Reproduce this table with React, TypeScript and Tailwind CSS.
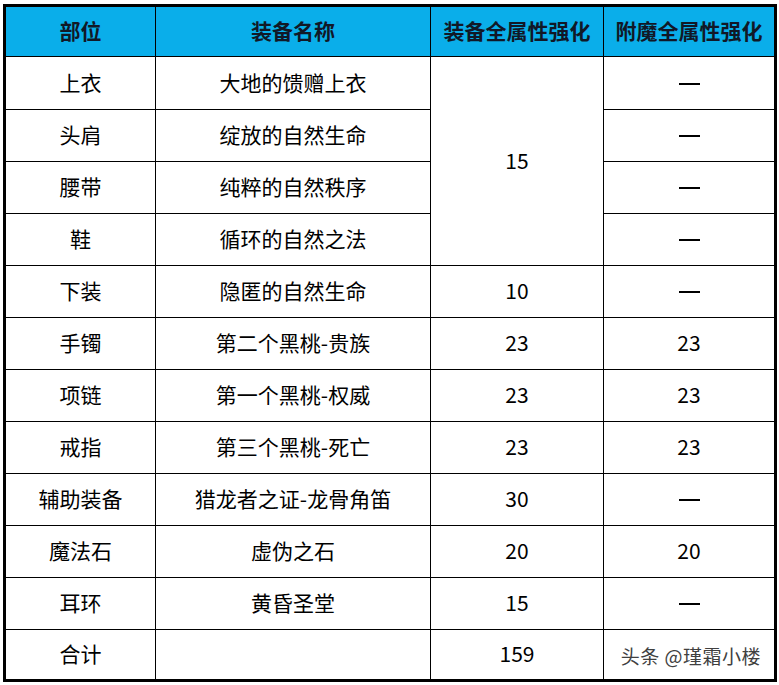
import { Fragment } from "react";

const rows: { part: string; name: string; equip?: string; enchant: string }[] = [
  { part: "上衣", name: "大地的馈赠上衣", enchant: "—" },
  { part: "头肩", name: "绽放的自然生命", enchant: "—" },
  { part: "腰带", name: "纯粹的自然秩序", enchant: "—" },
  { part: "鞋", name: "循环的自然之法", enchant: "—" },
  { part: "下装", name: "隐匿的自然生命", equip: "10", enchant: "—" },
  { part: "手镯", name: "第二个黑桃-贵族", equip: "23", enchant: "23" },
  { part: "项链", name: "第一个黑桃-权威", equip: "23", enchant: "23" },
  { part: "戒指", name: "第三个黑桃-死亡", equip: "23", enchant: "23" },
  { part: "辅助装备", name: "猎龙者之证-龙骨角笛", equip: "30", enchant: "—" },
  { part: "魔法石", name: "虚伪之石", equip: "20", enchant: "20" },
  { part: "耳环", name: "黄昏圣堂", equip: "15", enchant: "—" },
];

const cell = "bg-white flex items-center justify-center pb-px";

function Value({ v }: { v: string }) {
  if (v === "—") return <span className="block w-[21px] h-[2px] bg-black mt-[2px]" />;
  return <>{v}</>;
}

export default function App() {
  return (
    <div
      className="w-[779px] h-[685px] bg-white pt-[4px] pl-[3px] text-[21px] text-black"
      style={{ fontFamily: '"Noto Sans CJK SC", "Noto Sans", sans-serif' }}
    >
      <div className="w-[774px] grid grid-cols-[149px_274px_172px_170px] grid-rows-[49px_52px_repeat(10,51px)_49px] gap-px bg-black border-[3px] border-black">
        {["部位", "装备名称", "装备全属性强化", "附魔全属性强化"].map((h) => (
          <div key={h} className="bg-[#0aaeea] flex items-center justify-center pb-px font-bold text-[#111827]">
            {h}
          </div>
        ))}
        {rows.map((r, i) => (
          <Fragment key={r.part}>
            <div className={cell}>{r.part}</div>
            <div className={cell}>{r.name}</div>
            {i === 0 && <div className={cell + " row-span-4"}>15</div>}
            {r.equip && <div className={cell}>{r.equip}</div>}
            <div className={cell}>
              <Value v={r.enchant} />
            </div>
          </Fragment>
        ))}
        <div className={cell}>合计</div>
        <div className={cell}></div>
        <div className={cell}>159</div>
        <div className={cell + " relative"}>
          <span
            className="absolute right-[13px] top-[12px] text-[19px] text-[#404040] tracking-[0.5px]"
            style={{ textShadow: "0 0 2px #fff, 0 0 2px #fff" }}
          >
            头条 @瑾霜小楼
          </span>
        </div>
      </div>
    </div>
  );
}
